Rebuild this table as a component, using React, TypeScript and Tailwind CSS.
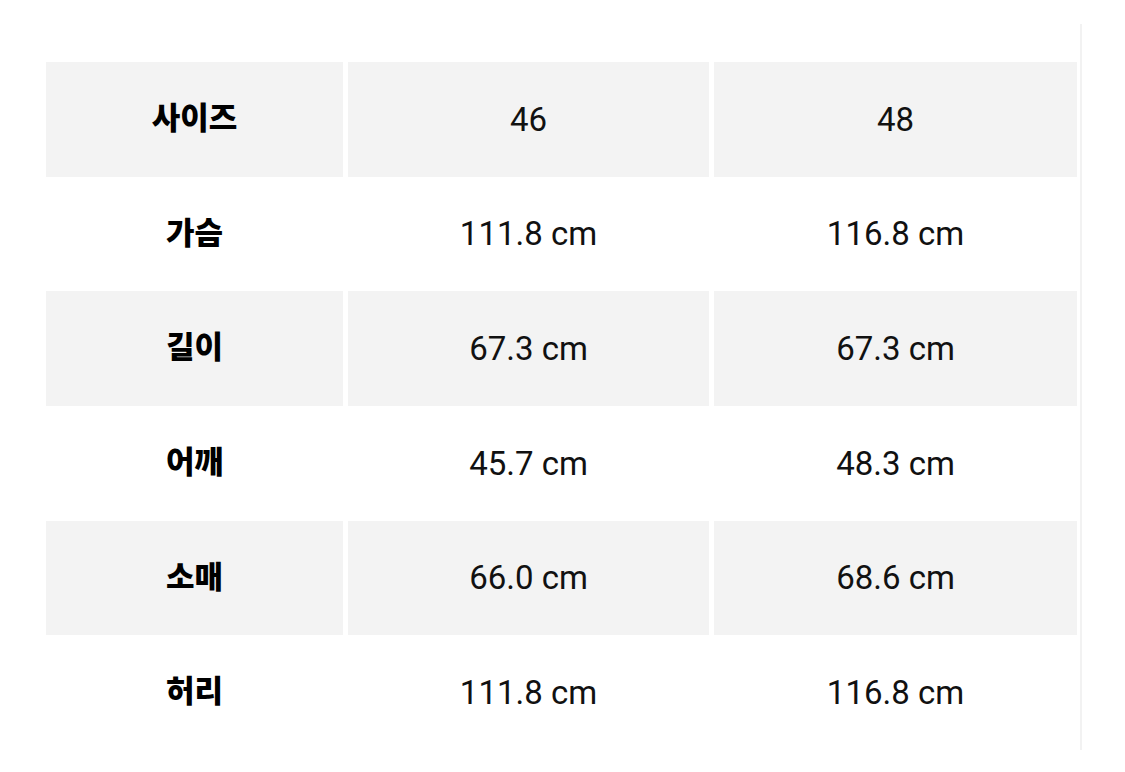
import React from "react";

const rows: [string, string, string][] = [
  ["사이즈", "46", "48"],
  ["가슴", "111.8 cm", "116.8 cm"],
  ["길이", "67.3 cm", "67.3 cm"],
  ["어깨", "45.7 cm", "48.3 cm"],
  ["소매", "66.0 cm", "68.6 cm"],
  ["허리", "111.8 cm", "116.8 cm"],
];

export default function App() {
  return (
    <div className="w-[1125px] h-[772px] bg-white overflow-hidden" style={{ fontFamily: 'Roboto, "Noto Sans CJK KR", sans-serif' }}>
      <div className="mt-[24px] w-[1082px] h-[726px] border-r-2 border-[#f2f2f2] pt-[38px] pl-[46px]">
        <div className="grid grid-cols-[297px_361px_363px] auto-rows-[114.67px] gap-x-[5px] w-[1031px]">
          {rows.map((r, i) => {
            const bg = i % 2 === 0 ? "bg-[#f3f3f3]" : "bg-white";
            return (
              <React.Fragment key={i}>
                <div className={`${bg} flex items-center justify-center text-[31px] font-extrabold text-black`}>
                  {r[0]}
                </div>
                <div className={`${bg} flex items-center justify-center text-[33px] text-[#111]`}>
                  {r[1]}
                </div>
                <div className={`${bg} flex items-center justify-center text-[33px] text-[#111]`}>
                  {r[2]}
                </div>
              </React.Fragment>
            );
          })}
        </div>
      </div>
    </div>
  );
}
